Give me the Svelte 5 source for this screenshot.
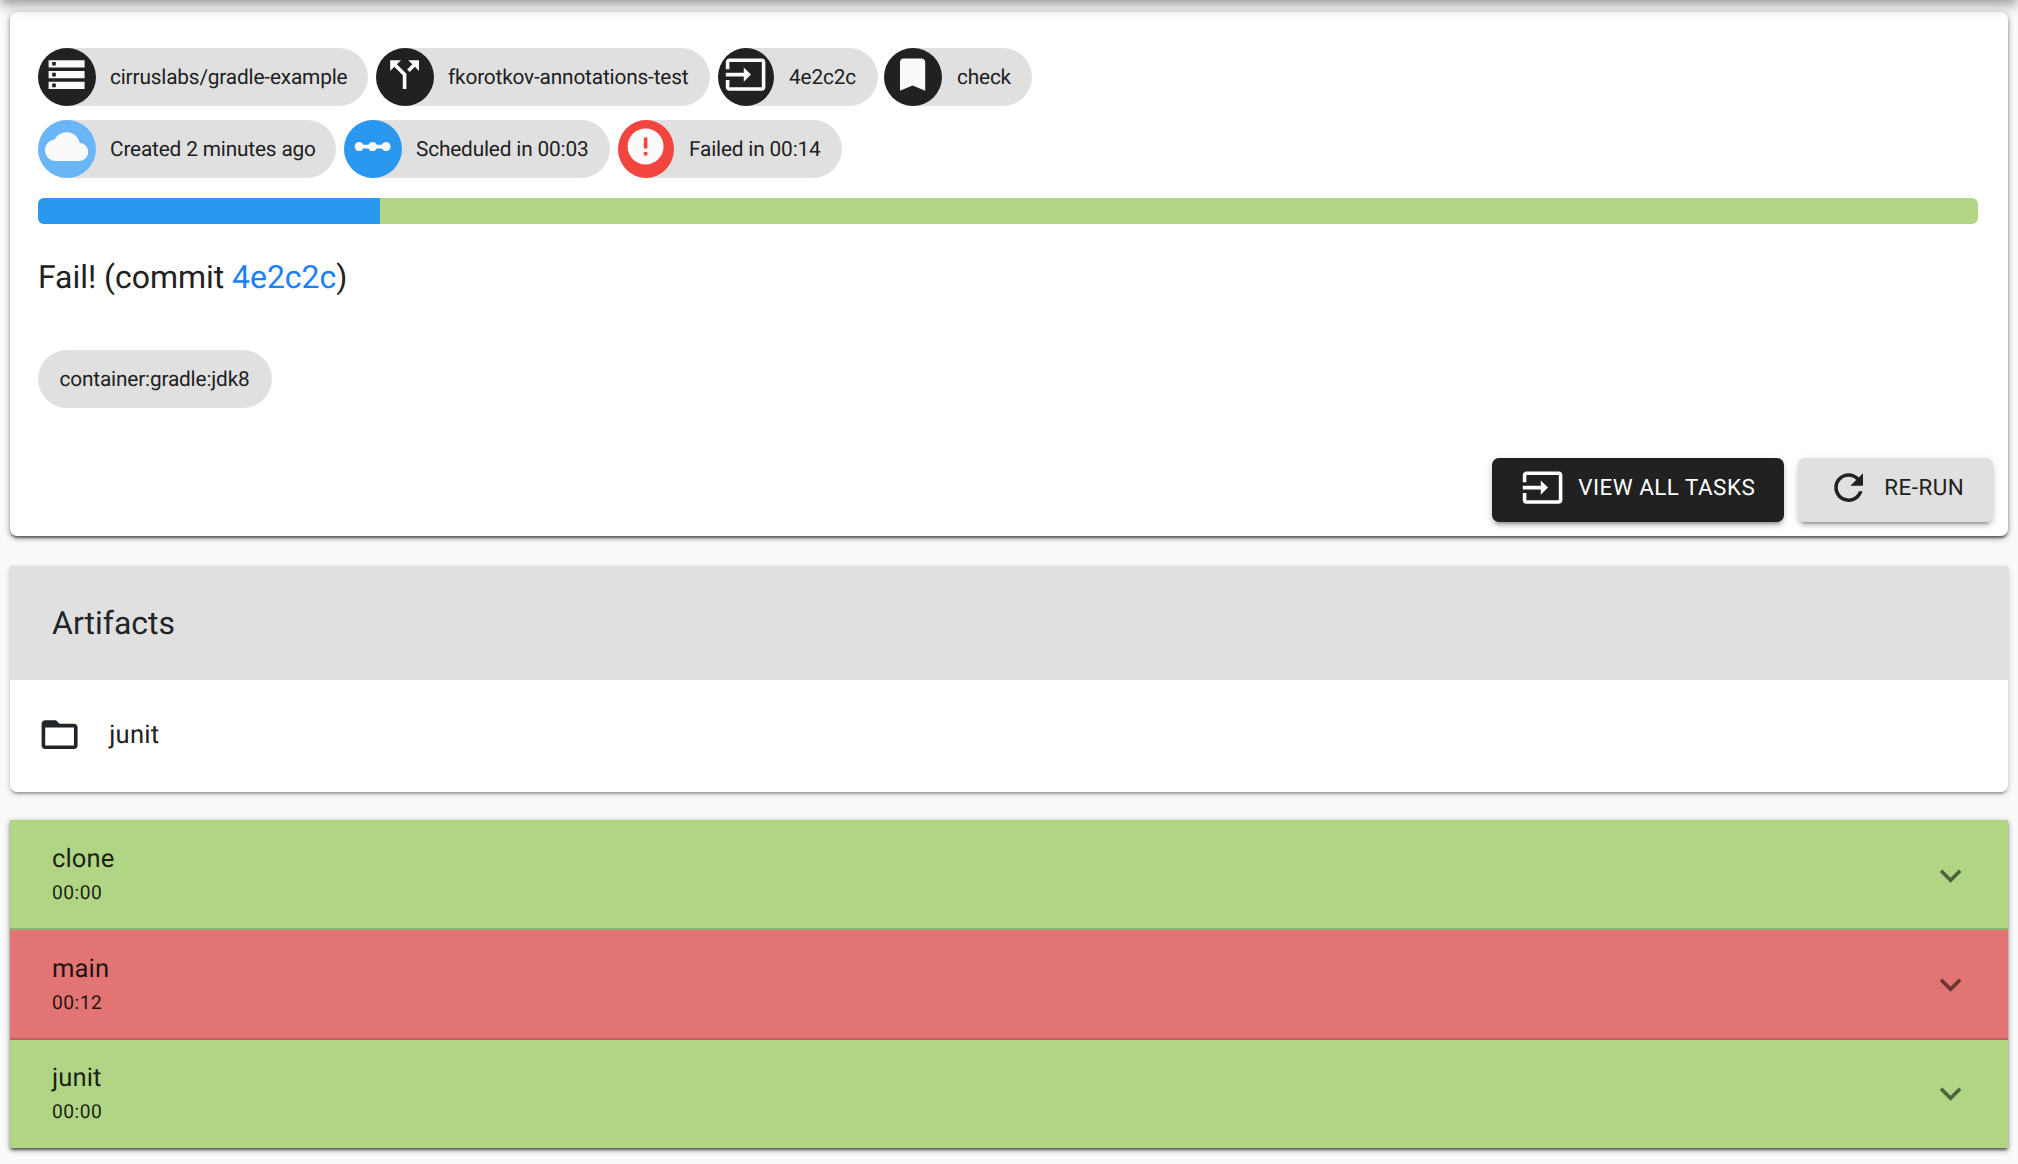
<script>
  const icons = {
    storage: 'M2 20h20v-4H2v4zm2-3h2v2H4v-2zM2 4v4h20V4H2zm4 3H4V5h2v2zm-4 7h20v-4H2v4zm2-3h2v2H4v-2z',
    split: 'M14 4l2.29 2.29-2.88 2.88 1.42 1.42 2.88-2.88L20 10V4zm-4 0H4v6l2.29-2.29 4.71 4.7V20h2v-8.41l-5.29-5.3z',
    input: 'M21 3.01H3c-1.1 0-2 .9-2 2V9h2V4.99h18v14.03H3V15H1v4.01c0 1.1.9 1.98 2 1.98h18c1.1 0 2-.88 2-1.98v-14c0-1.11-.9-2-2-2zM11 16l4-4-4-4v3H1v2h10v3z',
    bookmark: 'M17 3H7c-1.1 0-1.99.9-1.99 2L5 21l7-3 7 3V5c0-1.1-.9-2-2-2z',
    cloud: 'M19.35 10.04C18.67 6.59 15.64 4 12 4 9.11 4 6.6 5.64 5.35 8.04 2.34 8.36 0 10.91 0 14c0 3.31 2.69 6 6 6h13c2.76 0 5-2.24 5-5 0-2.64-2.05-4.78-4.65-4.96z',
    linear: 'M19.5 9.5c-1.03 0-1.9.62-2.29 1.5h-2.92c-.39-.88-1.26-1.5-2.29-1.5s-1.9.62-2.29 1.5H6.79c-.39-.88-1.26-1.5-2.29-1.5C3.12 9.5 2 10.62 2 12s1.12 2.5 2.5 2.5c1.03 0 1.9-.62 2.29-1.5h2.92c.39.88 1.26 1.5 2.29 1.5s1.9-.62 2.29-1.5h2.92c.39.88 1.26 1.5 2.29 1.5 1.38 0 2.5-1.12 2.5-2.5s-1.12-2.5-2.5-2.5z',
    error: 'M12 2C6.48 2 2 6.48 2 12s4.48 10 10 10 10-4.48 10-10S17.52 2 12 2zm1 15h-2v-2h2v2zm0-4h-2V7h2v6z',
    refresh: 'M17.65 6.35C16.2 4.9 14.21 4 12 4c-4.42 0-7.99 3.58-7.99 8s3.57 8 7.99 8c3.73 0 6.84-2.55 7.73-6h-2.08c-.82 2.33-3.04 4-5.65 4-3.31 0-6-2.69-6-6s2.69-6 6-6c1.66 0 3.14.69 4.22 1.78L13 11h7V4l-2.35 2.35z',
    folder: 'M20 6h-8l-2-2H4c-1.1 0-1.99.9-1.99 2L2 18c0 1.1.9 2 2 2h16c1.1 0 2-.9 2-2V8c0-1.1-.9-2-2-2zm0 12H4V8h16v10z',
    expand: 'M16.59 8.59L12 13.17 7.41 8.59 6 10l6 6 6-6z'
  };

  const chipRows = [
    [
      { icon: 'storage', label: 'cirruslabs/gradle-example', tone: 'dark', size: 'w330' },
      { icon: 'split', label: 'fkorotkov-annotations-test', tone: 'dark', size: 'w334' },
      { icon: 'input', label: '4e2c2c', tone: 'dark narrow', size: 'w160' },
      { icon: 'bookmark', label: 'check', tone: 'dark', size: 'w148' }
    ],
    [
      { icon: 'cloud', label: 'Created 2 minutes ago', tone: 'sky', size: 'w298' },
      { icon: 'linear', label: 'Scheduled in 00:03', tone: 'blue', size: 'w266' },
      { icon: 'error', label: 'Failed in 00:14', tone: 'red narrow', size: 'w224' }
    ]
  ];

  const commands = [
    { name: 'clone', time: '00:00', status: 'ok' },
    { name: 'main', time: '00:12', status: 'failed' },
    { name: 'junit', time: '00:00', status: 'ok' }
  ];

  const scheduledShare = (342 / 1940) * 100;
</script>

{#snippet glyph(name)}
  <svg viewBox="0 0 24 24" aria-hidden="true"><path d={icons[name]} /></svg>
{/snippet}

<div class="appbar"></div>
<main>
  <section class="card summary">
    <div class="chips">
      {#each chipRows as row}
        <div class="row">
          {#each row as chip}
            <div class="chip {chip.size}">
              <span class="avatar {chip.tone}">{@render glyph(chip.icon)}</span>
              <span class="label">{chip.label}</span>
            </div>
          {/each}
        </div>
      {/each}
    </div>
    <div class="progress"><div class="scheduled" style="width: {scheduledShare}%"></div></div>
    <h1>Fail! (commit <a href="#commit">4e2c2c</a>)</h1>
    <div class="chip tag"><span class="label">container:gradle:jdk8</span></div>
    <div class="actions">
      <button class="primary">{@render glyph('input')}<span>VIEW ALL TASKS</span></button>
      <button class="secondary">{@render glyph('refresh')}<span>RE-RUN</span></button>
    </div>
  </section>

  <section class="card artifacts">
    <header>Artifacts</header>
    <div class="folder">{@render glyph('folder')}<span>junit</span></div>
  </section>

  <section class="commands">
    {#each commands as command}
      <div class="command {command.status}">
        <div>
          <div class="name">{command.name}</div>
          <div class="time">{command.time}</div>
        </div>
        {@render glyph('expand')}
      </div>
    {/each}
  </section>
</main>

<style>
  :global(body) {
    background: #fafafa;
    font-family: Roboto, sans-serif;
    text-rendering: geometricPrecision;
    color: #212121;
    overflow: hidden;
  }
  * { box-sizing: border-box; }
  svg { display: block; flex: none; fill: currentColor; }
  .appbar {
    position: absolute;
    z-index: 2;
    top: -100px;
    left: 0;
    right: 0;
    height: 100px;
    box-shadow: 0 4px 8px -2px rgba(0, 0, 0, 0.2), 0 8px 10px 0 rgba(0, 0, 0, 0.14), 0 2px 20px 0 rgba(0, 0, 0, 0.12);
  }
  main { padding: 12px 10px 0; height: 1164px; }
  .card { background: #fff; border-radius: 7px; }
  .summary {
    height: 524px;
    padding: 36px 30px 0 28px;
    display: flex;
    flex-direction: column;
    box-shadow: 0 2px 6px rgba(0, 0, 0, 0.4), 0 2px 2px rgba(0, 0, 0, 0.28), 0 4px 2px -2px rgba(0, 0, 0, 0.24);
  }
  .chips { display: flex; flex-direction: column; gap: 14px; }
  .row { display: flex; gap: 8px; }
  .chip {
    height: 58px;
    border-radius: 29px;
    background: #e0e0e0;
    display: flex;
    align-items: center;
    font-size: 20.8px;
    letter-spacing: -0.16px;
    white-space: nowrap;
  }
  .label { padding-top: 2px; }
  .avatar {
    width: 58px;
    height: 58px;
    border-radius: 50%;
    display: flex;
    justify-content: center;
    padding-top: 5px;
    margin-right: 14px;
    flex: none;
    color: #fafafa;
  }
  .avatar.narrow { width: 56px; margin-right: 15px; }
  .avatar svg { width: 43.2px; height: 43.2px; }
  .dark { background: #212121; }
  .sky { background: #69b5f5; }
  .blue { background: #2b98f0; }
  .red { background: #f3453f; }
  .w330 { width: 330px; }
  .w334 { width: 334px; }
  .w160 { width: 160px; }
  .w148 { width: 148px; margin-left: -2px; }
  .w298 { width: 298px; }
  .w266 { width: 266px; }
  .w224 { width: 224px; }
  .w148 .avatar { margin-right: 15px; }
  .progress {
    margin-top: 20px;
    height: 26px;
    border-radius: 6px;
    overflow: hidden;
    background: #afd585;
  }
  .scheduled { height: 100%; background: #2b98f0; }
  h1 {
    margin: 27px 0 0;
    font-size: 32px;
    line-height: 52px;
    font-weight: 400;
    letter-spacing: -0.04px;
  }
  a { color: #1a80ff; text-decoration: none; }
  .tag { align-self: flex-start; margin-top: 47px; padding: 0 21.5px; width: 234px; }
  .actions { display: flex; justify-content: flex-end; gap: 14px; margin: 50px -15px 0 0; }
  button {
    height: 64px;
    border: 0;
    border-radius: 7px;
    display: flex;
    align-items: center;
    padding: 0 0 4px;
    font: 400 22.4px Roboto, sans-serif;
    text-rendering: geometricPrecision;
    letter-spacing: 0.5px;
    color: #212121;
    white-space: nowrap;
    box-shadow: 0 6px 2px -4px rgba(0, 0, 0, 0.2), 0 4px 4px rgba(0, 0, 0, 0.14), 0 2px 10px rgba(0, 0, 0, 0.12);
  }
  button svg { width: 43.2px; height: 43.2px; }
  .primary { width: 292px; background: #212121; color: #fff; padding-left: 29px; gap: 14px; }
  .secondary { width: 195px; background: #e0e0e0; padding-left: 29px; gap: 14px; }
  .artifacts {
    margin-top: 30px;
    height: 226px;
    border-radius: 0 0 7px 7px;
    box-shadow: 0 2px 6px rgba(0, 0, 0, 0.2), 0 2px 2px rgba(0, 0, 0, 0.14), 0 4px 2px -2px rgba(0, 0, 0, 0.12);
    color: #212529;
  }
  header {
    height: 114px;
    padding-left: 42px;
    background: #e0e0e0;
    font-size: 32px;
    line-height: 114px;
  }
  .folder { height: 110px; display: flex; align-items: center; padding-left: 27.5px; font-size: 25.6px; color: #212529; }
  .folder svg { width: 43.2px; height: 43.2px; margin-right: 28.5px; }
  .folder span { color: #212121; letter-spacing: 0.24px; }
  .commands {
    margin-top: 28px;
    box-shadow: 0 2px 6px rgba(0, 0, 0, 0.4), 0 2px 2px rgba(0, 0, 0, 0.28), 0 4px 2px -2px rgba(0, 0, 0, 0.24);
  }
  .command {
    height: 110px;
    padding: 0 36px 0 42px;
    display: flex;
    align-items: center;
    justify-content: space-between;
    border-bottom: 2px solid rgba(0, 0, 0, 0.16);
    color: rgba(0, 0, 0, 0.87);
  }
  .command:last-child { height: 108px; border: 0; padding-bottom: 3px; }
  .command svg { width: 43.2px; height: 43.2px; opacity: 0.62; margin-top: 3px; }
  .failed svg { margin-top: 1px; }
  .ok { background: #afd585; }
  .failed { background: #e27474; }
  .name { font-size: 25.6px; line-height: 38px; letter-spacing: 0.1px; }
  .time { font-size: 19.2px; line-height: 30px; letter-spacing: 0.5px; }
</style>
